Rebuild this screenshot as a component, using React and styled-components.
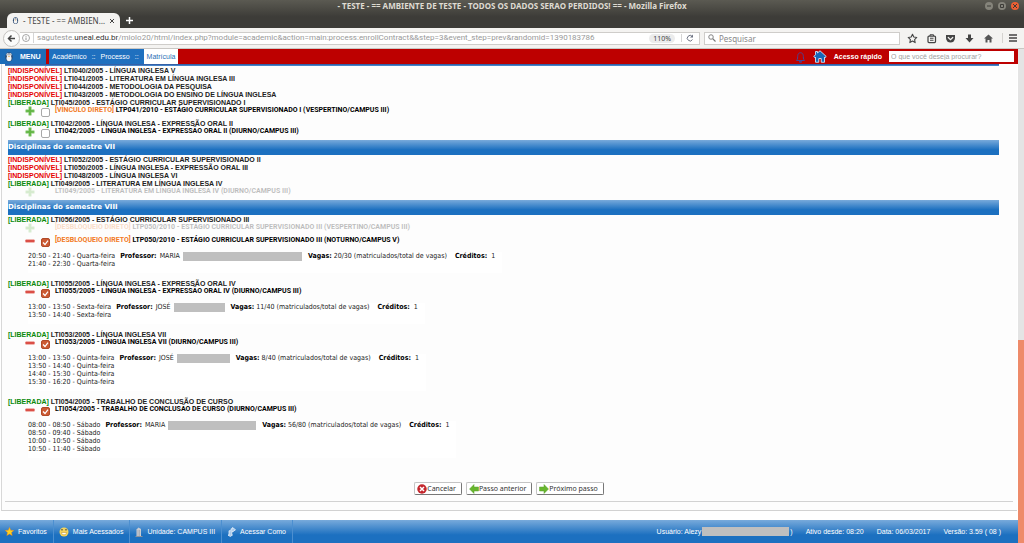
import React, { useState } from "react"
import styled, { createGlobalStyle, css } from "styled-components"

const GlobalStyle = createGlobalStyle`
	* {
		box-sizing: border-box;
	}

	body {
		margin: 0;
		background: #ffffff;
		font-family: "Liberation Sans", Arial, sans-serif;
		font-size: 7px;
		color: #222222;
	}

	button, input {
		font-family: inherit;
		font-size: inherit;
		color: inherit;
		margin: 0;
		padding: 0;
		border: 0;
		background: none;
	}

	a {
		color: inherit;
		text-decoration: none;
	}
`

const semesters = [
	{
		id: "vi",
		courses: [
			{ code: "LTI040/2005", name: "LÍNGUA INGLESA V" },
			{ code: "LTI041/2005", name: "LITERATURA EM LÍNGUA INGLESA III" },
			{ code: "LTI044/2005", name: "METODOLOGIA DA PESQUISA" },
			{ code: "LTI043/2005", name: "METODOLOGIA DO ENSINO DE LÍNGUA INGLESA" },
			{
				code: "LTI045/2005",
				name: "ESTÁGIO CURRICULAR SUPERVISIONADO I",
				free: true,
				groups: [
					{
						tag: "[VÍNCULO DIRETO]",
						label: "LTP041/2010 - ESTÁGIO CURRICULAR SUPERVISIONADO I (VESPERTINO/CAMPUS III)",
					},
				],
			},
			{
				code: "LTI042/2005",
				name: "LÍNGUA INGLESA - EXPRESSÃO ORAL II",
				free: true,
				groups: [{ label: "LTI042/2005 - LÍNGUA INGLESA - EXPRESSÃO ORAL II (DIURNO/CAMPUS III)" }],
			},
		],
	},
	{
		id: "vii",
		title: "Disciplinas do semestre VII",
		courses: [
			{ code: "LTI052/2005", name: "ESTÁGIO CURRICULAR SUPERVISIONADO II" },
			{ code: "LTI050/2005", name: "LÍNGUA INGLESA - EXPRESSÃO ORAL III" },
			{ code: "LTI048/2005", name: "LÍNGUA INGLESA VI" },
			{
				code: "LTI049/2005",
				name: "LITERATURA EM LÍNGUA INGLESA IV",
				free: true,
				groups: [
					{ label: "LTI049/2005 - LITERATURA EM LÍNGUA INGLESA IV (DIURNO/CAMPUS III)", disabled: true },
				],
			},
		],
	},
	{
		id: "viii",
		title: "Disciplinas do semestre VIII",
		courses: [
			{
				code: "LTI056/2005",
				name: "ESTÁGIO CURRICULAR SUPERVISIONADO III",
				free: true,
				groups: [
					{
						tag: "[DESBLOQUEIO DIRETO]",
						label: "LTP050/2010 - ESTÁGIO CURRICULAR SUPERVISIONADO III (VESPERTINO/CAMPUS III)",
						disabled: true,
					},
					{
						tag: "[DESBLOQUEIO DIRETO]",
						label: "LTP050/2010 - ESTÁGIO CURRICULAR SUPERVISIONADO III (NOTURNO/CAMPUS V)",
						checked: true,
						times: ["20:50 - 21:40 - Quarta-feira", "21:40 - 22:30 - Quarta-feira"],
						teacher: "MARIA",
						hidden: 119,
						seats: "20/30",
					},
				],
			},
			{
				code: "LTI055/2005",
				name: "LÍNGUA INGLESA - EXPRESSÃO ORAL IV",
				free: true,
				groups: [
					{
						label: "LTI055/2005 - LÍNGUA INGLESA - EXPRESSÃO ORAL IV (DIURNO/CAMPUS III)",
						checked: true,
						times: ["13:00 - 13:50 - Sexta-feira", "13:50 - 14:40 - Sexta-feira"],
						teacher: "JOSÉ",
						hidden: 51,
						seats: "11/40",
					},
				],
			},
			{
				code: "LTI053/2005",
				name: "LÍNGUA INGLESA VII",
				free: true,
				groups: [
					{
						label: "LTI053/2005 - LÍNGUA INGLESA VII (DIURNO/CAMPUS III)",
						checked: true,
						times: [
							"13:00 - 13:50 - Quinta-feira",
							"13:50 - 14:40 - Quinta-feira",
							"14:40 - 15:30 - Quinta-feira",
							"15:30 - 16:20 - Quinta-feira",
						],
						teacher: "JOSÉ",
						hidden: 53,
						seats: "8/40",
					},
				],
			},
			{
				code: "LTI054/2005",
				name: "TRABALHO DE CONCLUSÃO DE CURSO",
				free: true,
				groups: [
					{
						label: "LTI054/2005 - TRABALHO DE CONCLUSÃO DE CURSO (DIURNO/CAMPUS III)",
						checked: true,
						times: [
							"08:00 - 08:50 - Sábado",
							"08:50 - 09:40 - Sábado",
							"10:00 - 10:50 - Sábado",
							"10:50 - 11:40 - Sábado",
						],
						teacher: "MARIA",
						hidden: 88,
						seats: "56/80",
					},
				],
			},
		],
	},
]

/* icons */

const Penguin = ({ size = 10 }) => (
	<svg width={size} height={size} viewBox="0 0 20 20">
		<ellipse cx="10" cy="10" rx="7.5" ry="9.5" fill="#2b4a72" />
		<ellipse cx="10" cy="12.5" rx="5" ry="6" fill="#f4f4f4" />
		<ellipse cx="7.5" cy="5.5" rx="2.6" ry="2.8" fill="#ffffff" />
		<ellipse cx="12.5" cy="5.5" rx="2.6" ry="2.8" fill="#ffffff" />
		<circle cx="8" cy="5.5" r="1.1" fill="#222222" />
		<circle cx="12" cy="5.5" r="1.1" fill="#222222" />
		<path d="M8 8h4l-2 2.5z" fill="#e09a3a" />
	</svg>
)

const StarOutline = () => (
	<svg width="11" height="11" viewBox="0 0 22 22">
		<path d="M11 2.500l2.600 5.600 6 .8-4.400 4.200 1.100 6.100L11 16.200l-5.300 3 1.100-6.100L2.400 8.900l6-.8z" fill="none" stroke="#444444" strokeWidth="2.200" strokeLinejoin="round" />
	</svg>
)

const Clipboard = () => (
	<svg width="11" height="11" viewBox="0 0 22 22">
		<rect x="4" y="6" width="15" height="13" rx="2" fill="none" stroke="#444444" strokeWidth="2.500" />
		<path d="M8 6V3.500h7V6M8 10.500h7M8 14.500h7" fill="none" stroke="#444444" strokeWidth="2" />
	</svg>
)

const Pocket = () => (
	<svg width="11" height="11" viewBox="0 0 22 22">
		<path d="M2 4h18v6a9 9 0 0 1-18 0z" fill="#444444" />
		<path d="M6.500 9l4.500 4.500L15.500 9" fill="none" stroke="#f4f3f1" strokeWidth="2.400" strokeLinecap="round" />
	</svg>
)

const Download = () => (
	<svg width="11" height="11" viewBox="0 0 22 22">
		<path d="M8 3h6v7h5l-8 9-8-9h5z" fill="#444444" />
	</svg>
)

const House = () => (
	<svg width="11" height="11" viewBox="0 0 22 22">
		<path d="M11 3l9 8h-3v8h-4v-5H9v5H5v-8H2z" fill="#555555" />
	</svg>
)

const Hamburger = () => (
	<svg width="10" height="10" viewBox="0 0 20 20">
		<path d="M2 4h16M2 10h16M2 16h16" stroke="#444444" strokeWidth="3" />
	</svg>
)

const BackArrow = () => (
	<svg width="9" height="9" viewBox="0 0 18 18">
		<path d="M16 9H4M9 3L3 9l6 6" fill="none" stroke="#444444" strokeWidth="3" />
	</svg>
)

const Info = () => (
	<svg width="8" height="8" viewBox="0 0 16 16">
		<circle cx="8" cy="8" r="7" fill="none" stroke="#888888" strokeWidth="1.500" />
		<path d="M8 7v5M8 4v1.500" stroke="#888888" strokeWidth="1.800" />
	</svg>
)

const Reload = () => (
	<svg width="8" height="8" viewBox="0 0 16 16">
		<path d="M12.500 5A5.500 5.500 0 1 0 13 11" fill="none" stroke="#6d7282" strokeWidth="2" />
		<path d="M14 1v6H8z" fill="#6d7282" />
	</svg>
)

const Magnifier = () => (
	<svg width="8" height="8" viewBox="0 0 16 16">
		<circle cx="6" cy="6" r="4.500" fill="none" stroke="#777777" strokeWidth="1.800" />
		<path d="M9.500 9.500L15 15" stroke="#777777" strokeWidth="2.200" />
	</svg>
)

const Bell = () => (
	<svg width="11" height="12" viewBox="0 0 22 24">
		<path d="M3 19c3-3 2-7 2.500-10C6 5.500 8 3.500 11 3.500S16 5.500 16.500 9c.5 3-.5 7 2.500 10zM9 20.500h4v2H9z" fill="none" stroke="#4a4390" strokeWidth="2" />
	</svg>
)

const BlueHome = () => (
	<svg width="14" height="13" viewBox="0 0 28 26">
		<path d="M14 1.500L26.500 13l-2.500 2-1-1v10.500h-6.500V17h-5v7.500H5V14l-1 1-2.500-2L5 9.500V3h4v3z" fill="#1668b8" stroke="#d4e8fa" strokeWidth="1.800" strokeLinejoin="round" />
	</svg>
)

const Plus = () => (
	<svg width="10" height="10" viewBox="0 0 20 20">
		<path d="M7.500 1.500h5v6h6v5h-6v6h-5v-6h-6v-5h6z" fill="#62b544" stroke="#8fce78" />
	</svg>
)

const Minus = () => (
	<svg width="10" height="10" viewBox="0 0 20 20">
		<rect x="1" y="7.500" width="18" height="5" rx="1" fill="#d9473f" stroke="#ea8a80" />
	</svg>
)

const CancelIcon = () => (
	<svg width="10" height="10" viewBox="0 0 20 20">
		<circle cx="10" cy="10" r="9.500" fill="#c4262c" />
		<path d="M6 6l8 8M14 6l-8 8" stroke="#ffffff" strokeWidth="3" />
	</svg>
)

const GreenArrow = ({ left }) => (
	<svg width="10" height="10" viewBox="0 0 20 20">
		<path d={left ? "M1 10l9-9v5h9v8h-9v5z" : "M19 10l-9-9v5H1v8h9v5z"} fill="#67b52d" stroke="#5aa32c" />
	</svg>
)

const FavStar = () => (
	<svg width="9" height="9" viewBox="0 0 18 18">
		<path d="M9 1l2.400 5.500 6 .5-4.500 4 1.500 6L9 13.800 3.600 17l1.500-6-4.500-4 6-.5z" fill="#ffd21f" stroke="#f08c1c" />
	</svg>
)

const Smile = () => (
	<svg width="10" height="10" viewBox="0 0 20 20">
		<circle cx="10" cy="10" r="9" fill="#f6d55a" />
		<path d="M5 11h10c0 6-10 6-10 0z" fill="#ffffff" stroke="#b78a24" />
		<path d="M4 6.500c1-1.500 3-1.500 4 0M12 6.500c1-1.500 3-1.500 4 0" fill="none" stroke="#3d4147" strokeWidth="2" />
	</svg>
)

const Building = () => (
	<svg width="8" height="10" viewBox="0 0 16 20">
		<path d="M3 19V5l4-4 5 3v15z" fill="#c9ccd2" />
		<path d="M6 6v12M9 6v12" stroke="#8c929c" />
		<path d="M1 19h14" stroke="#8c929c" strokeWidth="2" />
	</svg>
)

const Switch = () => (
	<svg width="9" height="10" viewBox="0 0 18 20">
		<path d="M4 7.500h4V3.500h3V1l6 4.500-6 4.500V8.500H9.500V16H11l-4.500 3L2 16h2z" fill="#a9c8ea" stroke="#f0f6fc" strokeWidth="1.500" />
	</svg>
)

/* browser window */

const Screen = styled.div`
	height: 100vh;
	display: flex;
	flex-direction: column;
	overflow: hidden;
`

const WindowTop = styled.header`
	height: 28px;
	flex: none;
	display: flex;
	flex-direction: column;
	background: linear-gradient(#5b5a52, #3d3c38 60%);
`

const TitleBar = styled.div`
	height: 12px;
	display: grid;
	grid-template-columns: 1fr auto 1fr;
	align-items: center;
	color: #dfdbd2;
	font: bold 8px/12px "Noto Sans", sans-serif;
`

const WindowButtons = styled.div`
	display: flex;
	justify-content: flex-end;
	gap: 5px;
	padding-right: 5px;
`

const WindowButton = styled.button`
	width: 8px;
	height: 8px;
	border-radius: 50%;
	display: grid;
	place-items: center;
	color: #3d3c38;
	background: ${({ $close }) => ($close ? "#ee5f33" : "#85847b")};
`

const TabRow = styled.div`
	flex: 1;
	display: flex;
	align-items: flex-end;
	gap: 6px;
	padding-left: 7px;
	color: #ffffff;
`

const BrowserTab = styled.div`
	width: 113px;
	height: 15px;
	display: flex;
	align-items: center;
	gap: 4px;
	padding: 0 5px;
	border-radius: 6px 6px 0 0;
	background: #f4f3f1;
	color: #444444;
	font: 8px/15px "Noto Sans", sans-serif;
	white-space: nowrap;

	span {
		flex: 1;
	}
`

const PlainButton = styled.button`
	display: grid;
	place-items: center;
	flex: none;
`

const NavBar = styled.div`
	height: 21px;
	flex: none;
	display: flex;
	align-items: center;
	padding: 0 6px 0 3px;
	background: #f4f3f1;
	border-bottom: 1px solid #c9c7c4;
	font: 8px/12px "Noto Sans", sans-serif;
`

const BackButton = styled.button`
	width: 17px;
	height: 17px;
	flex: none;
	display: grid;
	place-items: center;
	border: 1px solid #c4c2bf;
	border-radius: 50%;
	background: #fbfbfa;
`

const UrlBar = styled.div`
	flex: 1;
	min-width: 0;
	height: 13px;
	display: flex;
	align-items: center;
	gap: 3px;
	padding: 0 5px 0 2px;
	background: #ffffff;
	border: 1px solid #cfcdca;
	border-left: 0;

	button {
		margin-left: 3px;
		padding-left: 4px;
		border-left: 1px solid #d5d5d5;
	}
`

const Url = styled.div`
	flex: 1;
	min-width: 0;
	overflow: hidden;
	padding-left: 3px;
	border-left: 1px solid #d5d5d5;
	color: #999999;
	font: 8px/10px Roboto, sans-serif;
	white-space: nowrap;

	b {
		font-weight: normal;
		color: #333333;
	}
`

const Zoom = styled.span`
	padding: 0 4px;
	border-radius: 5px;
	background: #ececec;
	color: #444444;
	font-size: 7px;
	line-height: 9px;
`

const SearchBox = styled.label`
	width: 196px;
	flex: none;
	height: 13px;
	margin: 0 7px 0 4px;
	display: flex;
	align-items: center;
	gap: 3px;
	padding: 0 3px;
	background: #ffffff;
	border: 1px solid #cfcdca;

	input {
		flex: 1;
		min-width: 0;
		outline: 0;
	}

	input::placeholder {
		color: #888888;
	}
`

const ToolIcons = styled.div`
	flex: none;
	display: flex;
	align-items: center;
	gap: 8px;
`

const MenuDivider = styled.div`
	padding-left: 5px;
	border-left: 1px solid #d5d3d0;
`

/* page */

const Viewport = styled.div`
	flex: 1;
	min-height: 0;
	display: flex;
`

const Page = styled.div`
	flex: 1;
	min-width: 0;
	display: flex;
	flex-direction: column;
`

const ScrollTrack = styled.div`
	width: 6px;
	flex: none;
	display: flex;
	flex-direction: column;
	justify-content: flex-end;
	background: #e4e4e4;
`

const ScrollThumb = styled.div`
	height: 41%;
	background: #ee8b6a;
`

const AppBar = styled.nav`
	height: 15px;
	flex: none;
	display: flex;
	align-items: stretch;
	background: #bd0000;
	color: #ffffff;
	line-height: 15px;
`

const MenuButton = styled.button`
	width: 46px;
	margin-right: 3px;
	padding-left: 4px;
	display: flex;
	align-items: center;
	gap: 6px;
	background: #1c6db9;
	font-weight: bold;
`

const Crumbs = styled.div`
	display: flex;
	gap: 5px;
	padding-left: 3px;
	background: #1f70bf;
`

const Current = styled.a`
	padding: 0 3px;
	background: #ffffff;
	color: #2a6fb5;
`

const QuickAccess = styled.div`
	margin-left: auto;
	display: flex;
	align-items: center;
	gap: 7px;
	padding-right: 4px;

	label {
		font-weight: bold;
	}

	input {
		width: 125px;
		height: 11px;
		padding: 0 2px;
		background: #ffffff;
		color: #333333;
	}

	input::placeholder {
		color: #a0a0a0;
	}
`

const Content = styled.main`
	flex: 1;
	min-height: 0;
	margin: 0 1px 9px 1px;
	padding-bottom: 8px;
	display: flex;
	flex-direction: column;
	border-left: 1px solid #d8d8d8;
	border-bottom: 1px solid #d2d2d2;
	background: #fdfdfd;
`

const Enrollment = styled.form`
	flex: 1;
	margin: 0 4px 0 3px;
	display: flex;
	flex-direction: column;
	border-bottom: 1px solid #d2d2d2;
`

const CourseList = styled.div`
	padding: 0 14px 0 3px;
`

const barFill = css`
	background: linear-gradient(#78aadb, #1c70c0 65%);
`

const TopStrip = styled.div`
	height: 2px;
	flex: none;
	margin-right: 14px;
	background: linear-gradient(#2c4f96, #4f95d8);
`

const SemesterTitle = styled.h2`
	margin: 0;
	height: 15px;
	${barFill}
	color: #ffffff;
	font: bold 7px/14px "DejaVu Sans", sans-serif;
`

const CourseName = styled.div`
	height: 8px;
	font-weight: bold;
	line-height: 9px;
	white-space: nowrap;

	span {
		color: ${({ $free }) => ($free ? "#0a8a0a" : "#e60000")};
	}
`

const GroupRow = styled.div`
	height: 13px;
	padding-left: 17px;
	display: grid;
	grid-template-columns: 10px 8px 1fr;
	column-gap: 6px;
	align-items: start;
	opacity: ${({ $faded }) => ($faded ? 0.25 : 1)};

	label {
		grid-column: 3;
		color: #000000;
		font: bold 7px/8px Roboto, sans-serif;
		white-space: nowrap;
	}

	label span {
		color: #f27a24;
	}
`

const Check = styled.input`
	appearance: none;
	width: 9px;
	height: 9px;
	margin-top: 2px;
	border: 1px solid #a8a8a8;
	border-radius: 2px;
	background: #ffffff;

	&:checked {
		border-color: #b04a28;
		background: #cc5a33
			url("data:image/svg+xml,%3Csvg xmlns='http://www.w3.org/2000/svg' viewBox='0 0 14 14'%3E%3Cpath d='M2 7l4 4 6-8' fill='none' stroke='white' stroke-width='2.500'/%3E%3C/svg%3E")
			center / 7px no-repeat;
	}
`

const Details = styled.div`
	width: fit-content;
	margin: 3px 0 6px 20px;
	padding: 0 7px 5px 0;
	display: flex;
	align-items: flex-start;
	background: #ffffff;
	font: 7px/8px "DejaVu Sans Condensed", "DejaVu Sans", sans-serif;
	white-space: nowrap;

	p {
		margin: 0;
	}

	b {
		color: #000000;
	}
`

const Teacher = styled.p`
	display: flex;
	gap: 3px;
	padding: 0 6px 0 5px;
`

const Redacted = styled.span`
	display: block;
	width: ${({ $width }) => $width}px;
	height: 9px;
	background: #bfbfbf;
`

const Seats = styled.p`
	padding-right: 8px;
`

const Actions = styled.div`
	margin-top: auto;
	padding-bottom: 6px;
	display: flex;
	justify-content: center;
	gap: 4px;
`

const ActionButton = styled.button`
	height: 13px;
	padding: 0 5px 0 2px;
	display: flex;
	align-items: center;
	border: 1px solid #c4c4c4;
	border-right-color: #777777;
	border-bottom-color: #777777;
	border-radius: 2px;
	background: #ffffff;
	color: #333333;
	font: 7px/11px "Noto Sans", sans-serif;
`

const StatusBar = styled.footer`
	height: 23px;
	flex: none;
	display: flex;
	align-items: stretch;
	padding-right: 17px;
	${barFill}
	color: #ffffff;
	line-height: 24px;
	white-space: nowrap;
`

const Shortcut = styled.a`
	display: flex;
	align-items: center;
	gap: 4px;
	padding: 0 6px 0 5px;
	border-right: 1px solid #4c8fd0;
`

const Session = styled.div`
	margin-left: auto;
	display: flex;
	gap: 13px;

	span {
		display: flex;
		align-items: center;
		gap: 1px;
	}
`

function Group({ group }) {
	const [checked, setChecked] = useState(!!group.checked)
	const id = group.label.replace(/\W/g, "") + (group.disabled ? "off" : "")

	return (
		<>
			<GroupRow $faded={group.disabled}>
				<PlainButton type="button" disabled={group.disabled} aria-label="Detalhes">
					{group.times ? <Minus /> : <Plus />}
				</PlainButton>
				{!group.disabled && (
					<Check type="checkbox" id={id} checked={checked} onChange={() => setChecked(!checked)} />
				)}
				<label htmlFor={id}>
					{group.tag && <span>{group.tag} </span>}
					{group.label}
				</label>
			</GroupRow>
			{group.times && (
				<Details>
					<div>
						{group.times.map((time) => (
							<p key={time}>{time}</p>
						))}
					</div>
					<Teacher>
						<b>Professor:</b>
						{group.teacher}
						<Redacted $width={group.hidden} />
					</Teacher>
					<Seats>
						<b>Vagas:</b> {group.seats} (matriculados/total de vagas)
					</Seats>
					<p>
						<b>Créditos:</b>&nbsp; 1
					</p>
				</Details>
			)}
		</>
	)
}

function Course({ course }) {
	return (
		<div>
			<CourseName $free={course.free}>
				<span>{course.free ? "[LIBERADA]" : "[INDISPONÍVEL]"}</span> {course.code} - {course.name}
			</CourseName>
			{course.groups?.map((group) => (
				<Group key={group.label} group={group} />
			))}
		</div>
	)
}

function BrowserChrome() {
	return (
		<>
			<WindowTop>
				<TitleBar>
					<span />
					<span>- TESTE - == AMBIENTE DE TESTE - TODOS OS DADOS SERAO PERDIDOS! == - Mozilla Firefox</span>
					<WindowButtons>
						<WindowButton aria-label="Minimizar">
							<svg width="6" height="6" viewBox="0 0 6 6"><path d="M1 3h4" stroke="currentColor" /></svg>
						</WindowButton>
						<WindowButton aria-label="Maximizar">
							<svg width="6" height="6" viewBox="0 0 6 6"><path d="M1.500 1.500h3v3h-3z" fill="none" stroke="currentColor" /></svg>
						</WindowButton>
						<WindowButton $close aria-label="Fechar">
							<svg width="6" height="6" viewBox="0 0 6 6"><path d="M1 1l4 4M5 1L1 5" stroke="currentColor" /></svg>
						</WindowButton>
					</WindowButtons>
				</TitleBar>
				<TabRow>
					<BrowserTab>
						<Penguin size={9} />
						<span>- TESTE - == AMBIEN…</span>
						<PlainButton aria-label="Fechar aba">
							<svg width="6" height="6" viewBox="0 0 6 6"><path d="M1 1l4 4M5 1L1 5" stroke="currentColor" /></svg>
						</PlainButton>
					</BrowserTab>
					<PlainButton aria-label="Nova aba">
						<svg width="7" height="15" viewBox="0 0 7 15"><path d="M0 7.500h7M3.500 4v7" stroke="#ffffff" strokeWidth="1.500" /></svg>
					</PlainButton>
				</TabRow>
			</WindowTop>
			<NavBar>
				<BackButton aria-label="Voltar"><BackArrow /></BackButton>
				<UrlBar>
					<Info />
					<Url>
						saguteste.<b>uneal.edu.br</b>
						/miolo20/html/index.php?module=academic&action=main:process:enrollContract&&step=3&event_step=prev&randomid=1390183786
					</Url>
					<Zoom>110%</Zoom>
					<PlainButton aria-label="Recarregar"><Reload /></PlainButton>
				</UrlBar>
				<SearchBox>
					<Magnifier />
					<input placeholder="Pesquisar" aria-label="Pesquisar" />
				</SearchBox>
				<ToolIcons>
					<PlainButton aria-label="Favoritar"><StarOutline /></PlainButton>
					<PlainButton aria-label="Biblioteca"><Clipboard /></PlainButton>
					<PlainButton aria-label="Pocket"><Pocket /></PlainButton>
					<PlainButton aria-label="Downloads"><Download /></PlainButton>
					<PlainButton aria-label="Início"><House /></PlainButton>
					<MenuDivider>
						<PlainButton aria-label="Abrir menu"><Hamburger /></PlainButton>
					</MenuDivider>
				</ToolIcons>
			</NavBar>
		</>
	)
}

function App() {
	return (
		<Screen>
			<GlobalStyle />
			<BrowserChrome />
			<Viewport>
				<Page>
					<AppBar>
						<MenuButton><Penguin />MENU</MenuButton>
						<Crumbs>
							<a href="#academico">Acadêmico</a>
							<span>::</span>
							<a href="#processo">Processo</a>
							<span>::</span>
							<Current href="#matricula">Matrícula</Current>
						</Crumbs>
						<QuickAccess>
							<PlainButton aria-label="Avisos"><Bell /></PlainButton>
							<PlainButton aria-label="Página inicial"><BlueHome /></PlainButton>
							<label htmlFor="quick">Acesso rápido</label>
							<input id="quick" placeholder="O que você deseja procurar?" />
						</QuickAccess>
					</AppBar>
					<Content>
						<Enrollment onSubmit={(e) => e.preventDefault()}>
							<TopStrip />
							<CourseList>
								{semesters.map((semester) => (
									<section key={semester.id}>
										{semester.title && <SemesterTitle>{semester.title}</SemesterTitle>}
										{semester.courses.map((course) => (
											<Course key={course.code} course={course} />
										))}
									</section>
								))}
							</CourseList>
							<Actions>
								<ActionButton type="button"><CancelIcon />Cancelar</ActionButton>
								<ActionButton type="button"><GreenArrow left />Passo anterior</ActionButton>
								<ActionButton><GreenArrow />Próximo passo</ActionButton>
							</Actions>
						</Enrollment>
					</Content>
					<StatusBar>
						<Shortcut href="#favoritos"><FavStar />Favoritos</Shortcut>
						<Shortcut href="#acessados"><Smile />Mais Acessados</Shortcut>
						<Shortcut href="#unidade"><Building />Unidade: CAMPUS III</Shortcut>
						<Shortcut href="#acessar"><Switch />Acessar Como</Shortcut>
						<Session>
							<span>Usuário: Alezy <Redacted $width={87} />)</span>
							<span>Ativo desde: 08:20</span>
							<span>Data: 06/03/2017</span>
							<span>Versão: 3.59 ( 08 )</span>
						</Session>
					</StatusBar>
				</Page>
				<ScrollTrack>
					<ScrollThumb />
				</ScrollTrack>
			</Viewport>
		</Screen>
	)
}

export default App
